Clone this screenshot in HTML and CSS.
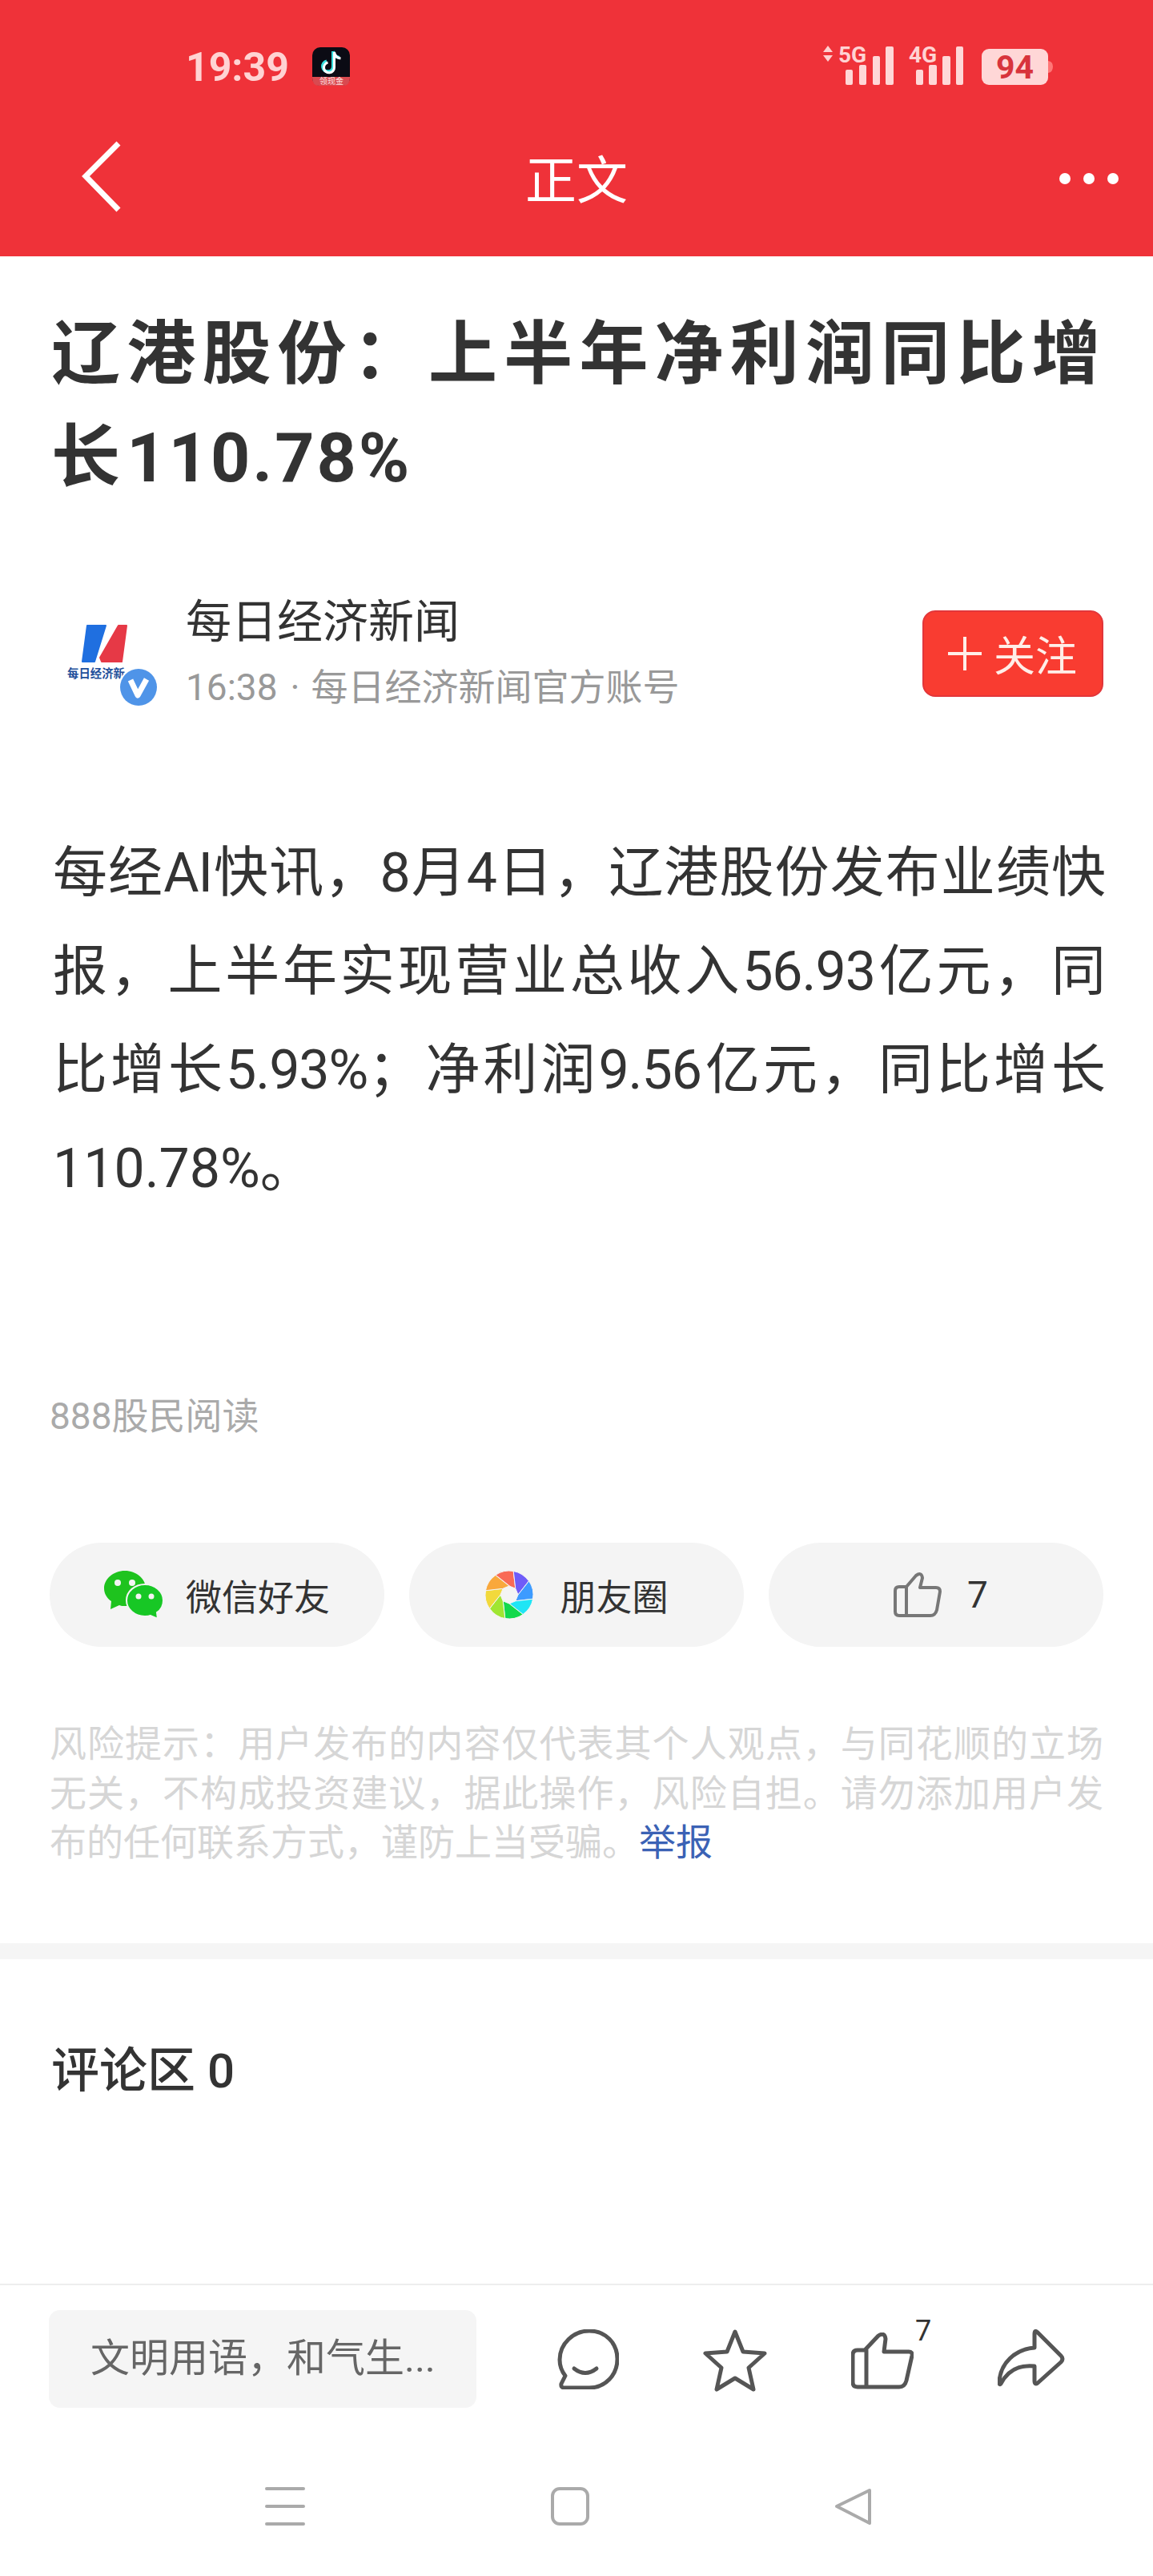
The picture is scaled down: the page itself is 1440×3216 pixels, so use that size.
FILE: index.html
```html
<!DOCTYPE html>
<html lang="zh-CN">
<head>
<meta charset="utf-8">
<title>正文</title>
<link rel="stylesheet" href="styles.css">
</head>
<body>
<div class="page">
  <header class="top">
    <div class="status">
      <span class="time">19:39</span>
      <svg class="tiktok" width="47" height="48" viewBox="0 0 47 48">
        <rect width="47" height="48" rx="10" fill="#0b0b14"/>
        <path d="M0 37 H47 V38 Q47 48 38 48 H9 Q0 48 0 38Z" fill="#d94a50"/>
        <path d="M26 5 V24 A6.5 6.5 0 1 1 18 17.500 M26 5 Q27 12 34 13" fill="none" stroke="#35e0e0" stroke-width="4"/>
        <path d="M27.500 6 V25 A6.500 6.500 0 1 1 19.500 19 M27.500 6 Q28.500 13 35.500 14" fill="none" stroke="#ffffff" stroke-width="3"/>
        <text x="9" y="46" class="tiktok-text">领现金</text>
      </svg>
      <svg class="signal" width="287" height="56" viewBox="0 -6 287 56">
        <path d="M6 0 L12 8 H0Z M6 20 L12 12 H0Z" class="sig-soft"/>
        <text x="19" y="21" class="sig-label">5G</text>
        <rect x="28" y="30" width="9" height="19" rx="2" class="sig-fill"/>
        <rect x="45" y="24" width="9" height="25" rx="2" class="sig-fill"/>
        <rect x="62" y="13" width="9" height="36" rx="2" class="sig-fill"/>
        <rect x="78" y="1" width="10" height="48" rx="2" class="sig-fill"/>
        <text x="107" y="21" class="sig-label">4G</text>
        <rect x="116" y="30" width="9" height="19" rx="2" class="sig-fill"/>
        <rect x="132" y="24" width="10" height="25" rx="2" class="sig-fill"/>
        <rect x="149" y="13" width="10" height="36" rx="2" class="sig-fill"/>
        <rect x="166" y="1" width="9" height="48" rx="2" class="sig-fill"/>
        <rect x="198" y="4" width="83" height="45" rx="9" class="sig-fill"/>
        <path d="M281 19 Q287 20 287 26 Q287 33 281 34Z" class="sig-nub"/>
        <text x="239.500" y="41" class="sig-batt">94</text>
      </svg>
    </div>
    <div class="bar">
      <svg class="back" width="50" height="90" viewBox="0 0 50 90">
        <path d="M46 3 L5 44 L46 86" fill="none" stroke="#fff" stroke-width="7"/>
      </svg>
      <span class="bar-title">正文</span>
      <div class="dots"><i></i><i></i><i></i></div>
    </div>
  </header>

  <main class="content">
    <h1 class="headline">辽港股份：上半年净利润同比增长<span class="latin">110.78%</span></h1>

    <div class="author">
      <div class="avatar">
        <svg width="116" height="104" viewBox="0 0 116 104">
          <polygon points="25,1 48,1 34,46 19,46" fill="#1f6fe0" stroke="#1f6fe0" stroke-width="2" stroke-linejoin="round"/>
          <polygon points="64,1 74,1 68,46 43,46 41,41" fill="#e63946" stroke="#e63946" stroke-width="2" stroke-linejoin="round"/>
          <text x="0" y="66" class="logo-text">每日经济新</text>
          <circle cx="89" cy="78" r="25" fill="#fff"/>
          <circle cx="89" cy="78" r="23" fill="#4f94e8"/>
          <path d="M79 69 L88 88 L99 68" fill="none" stroke="#fff" stroke-width="7" stroke-linejoin="round"/>
        </svg>
      </div>
      <div class="author-info">
        <div class="author-name">每日经济新闻</div>
        <div class="author-sub">16:38<span class="sep">·</span>每日经济新闻官方账号</div>
      </div>
      <button class="follow"><span class="plus"></span>关注</button>
    </div>

    <p class="article">
      <span class="line">每经AI快讯，8月4日，辽港股份发布业绩快</span>
      <span class="line">报，上半年实现营业总收入56.93亿元，同</span>
      <span class="line">比增长5.93%；净利润9.56亿元，同比增长</span>
      <span class="line line-end">110.78%。</span>
    </p>

    <div class="reads">888股民阅读</div>

    <div class="shares">
      <div class="pill">
        <svg class="pill-icon" width="74" height="60" viewBox="0 0 74 60">
          <path d="M26 0 C40 0 52 10 52 22 C52 34 40 44 26 44 C23 44 21 44 19 43 L8 48 L9 38 C3 34 0 28 0 22 C0 10 12 0 26 0Z" fill="#1ec31e"/>
          <path d="M51 17 C64 17 74 26 74 37 C74 43 71 49 66 52 L67 60 L58 56 C56 57 53 57 51 57 C38 57 28 48 28 37 C28 26 38 17 51 17Z" fill="#17c725" stroke="#f4f4f4" stroke-width="2"/>
          <circle cx="17" cy="15" r="4" fill="#f4f4f4"/><circle cx="35" cy="15" r="4" fill="#f4f4f4"/>
          <circle cx="43" cy="32" r="3.500" fill="#f4f4f4"/><circle cx="59" cy="32" r="3.500" fill="#f4f4f4"/>
        </svg>
        <span>微信好友</span>
      </div>
      <div class="pill pill-moments">
        <svg class="pill-icon" width="62" height="62" viewBox="-31 -31 62 62">
          <g stroke="#f4f4f4" stroke-width="1">
            <path d="M0 -11 L-17.200 -24.600 A30 30 0 0 1 5.200 -29.500 L7.800 -7.800Z" fill="#f96a55"/>
            <path d="M0 -11 L-17.200 -24.600 A30 30 0 0 1 5.200 -29.500 L7.800 -7.800Z" fill="#6f5cf8" transform="rotate(45)"/>
            <path d="M0 -11 L-17.200 -24.600 A30 30 0 0 1 5.200 -29.500 L7.800 -7.800Z" fill="#3d9bff" transform="rotate(90)"/>
            <path d="M0 -11 L-17.200 -24.600 A30 30 0 0 1 5.200 -29.500 L7.800 -7.800Z" fill="#1fe5f5" transform="rotate(135)"/>
            <path d="M0 -11 L-17.200 -24.600 A30 30 0 0 1 5.200 -29.500 L7.800 -7.800Z" fill="#12d94c" transform="rotate(180)"/>
            <path d="M0 -11 L-17.200 -24.600 A30 30 0 0 1 5.200 -29.500 L7.800 -7.800Z" fill="#a0e632" transform="rotate(225)"/>
            <path d="M0 -11 L-17.200 -24.600 A30 30 0 0 1 5.200 -29.500 L7.800 -7.800Z" fill="#f2d93c" transform="rotate(270)"/>
            <path d="M0 -11 L-17.200 -24.600 A30 30 0 0 1 5.200 -29.500 L7.800 -7.800Z" fill="#f9a83c" transform="rotate(315)"/>
          </g>
        </svg>
        <span>朋友圈</span>
      </div>
      <div class="pill pill-like">
        <svg class="pill-icon" width="60" height="56" viewBox="0 0 60 56">
          <path d="M16 18 L28 4 Q35 -1 36 7 L33 19 H53 Q58 19 58 24 L54 47 Q52 54 46 54 H7 Q2 54 2 49 V23 Q2 18 7 18 H16 V54" fill="none" stroke="#777" stroke-width="4" stroke-linejoin="round"/>
        </svg>
        <span class="pill-num">7</span>
      </div>
    </div>

    <p class="risk">风险提示：用户发布的内容仅代表其个人观点，与同花顺的立场无关，不构成投资建议，据此操作，风险自担。请勿添加用户发布的任何联系方式，谨防上当受骗。<a class="report">举报</a></p>

    <div class="divider"></div>

    <h2 class="comments">评论区 0</h2>
  </main>

  <footer class="toolbar">
    <div class="input">文明用语，和气生...</div>
    <div class="tools">
      <svg width="78" height="75" viewBox="0 0 78 75">
        <path d="M10 73 L41 73 C61 73 76 57 76 37 C76 17 61 2 41 2 C21 2 4 18 4 38 C4 46 7 53 11 58 Q8 64 6 68 Q5 73 10 73Z" class="tool-line"/>
        <path d="M22 49 Q36 60 50 49" class="tool-line"/>
      </svg>
      <svg width="80" height="78" viewBox="0 0 80 78">
        <path d="M40 3 L50 28 L77 30 L57 48 L63 75 L40 61 L17 75 L23 48 L3 30 L30 28Z" class="tool-line"/>
      </svg>
      <div class="tool-like">
        <svg width="78" height="71" viewBox="0 0 78 71">
          <path d="M17 22 L34 4 Q42 -1 43 8 L41 24 H72 Q77 24 76 29 L69 60 Q67 68 60 68 H8 Q2 68 2 62 V28 Q2 22 8 22 H19 V68" class="tool-line"/>
        </svg>
        <span class="like-count">7</span>
      </div>
      <svg width="84" height="72" viewBox="0 0 84 72">
        <path d="M46 23 V6 Q46 0 50 4 L79 33 Q83 37 79 41 L50 67 Q46 70 46 64 V46 C26 44 12 52 4 68 Q2 70 2 66 C3 42 22 25 46 23Z" class="tool-line"/>
      </svg>
    </div>
  </footer>

  <nav class="sysnav">
    <div class="nav-menu"><i></i><i></i><i></i></div>
    <div class="nav-home"></div>
    <svg width="48" height="47" viewBox="0 0 48 47">
      <path d="M44 3 L3 23 L44 44Z" fill="none" stroke="#aaa" stroke-width="4" stroke-linejoin="round"/>
    </svg>
  </nav>
</div>
</body>
</html>
```

FILE: styles.css
```css
* { box-sizing: border-box; }
html, body { margin: 0; padding: 0; }
body {
  background: #fff;
  font-family: Roboto, "Noto Sans CJK SC", sans-serif;
  color: #333;
}
.page {
  width: 1440px;
  height: 3216px;
  display: flex;
  flex-direction: column;
  overflow: hidden;
}

/* Red header */
.top { height: 320px; background: #ef3239; flex: none; }
.status {
  height: 120px;
  padding: 57px 125px 0 232px;
  display: flex;
  align-items: flex-start;
}
.time {
  font-size: 50px;
  line-height: 50px;
  font-weight: 700;
  color: #ffd3d3;
  width: 158px;
  margin-top: 2px;
}
.tiktok { margin-top: 2px; }
.tiktok-text { font-size: 10px; fill: #ffe0e0; font-family: "Noto Sans CJK SC", sans-serif; }
.signal { margin-left: auto; margin-top: -6px; }
.sig-fill { fill: #ffd7d7; }
.sig-soft { fill: #ffd0d0; }
.sig-nub { fill: #f77; }
.sig-label { font-size: 28px; font-weight: 700; fill: #ffd3d3; font-family: "Liberation Sans Narrow", Roboto, sans-serif; }
.sig-batt { font-size: 41px; font-weight: 700; fill: #d8343c; text-anchor: middle; }
.bar {
  height: 200px;
  padding: 0 43px 0 102px;
  display: flex;
  align-items: center;
  justify-content: space-between;
  position: relative;
}
.back { margin-top: 2px; }
.bar-title {
  font-size: 64px;
  line-height: 64px;
  color: #fff;
  margin-top: 14px;
  position: absolute;
  left: 656px;
}
.dots { display: flex; gap: 16px; margin-top: 6px; }
.dots i { width: 14px; height: 14px; border-radius: 50%; background: #fff; display: block; }

/* Article */
.content { flex: 1; min-height: 0; }
.headline {
  margin: 58px 50px 0 64px;
  font-size: 86px;
  line-height: 129px;
  font-weight: 700;
  letter-spacing: 8.200px;
  color: #333;
}
.latin { letter-spacing: 3px; }
.author {
  margin: 113px 62px 0 84px;
  height: 137px;
  display: flex;
  align-items: center;
}
.avatar { width: 148px; height: 137px; padding-top: 31px; flex: none; }
.avatar svg { display: block; }
.logo-text { font-size: 14.400px; font-weight: 700; fill: #1f4f9a; font-family: "Noto Sans CJK SC", serif; }
.author-info { flex: 1; }
.author-name { font-size: 57px; line-height: 60px; color: #333; }
.author-sub { font-size: 46px; line-height: 60px; color: #999; margin-top: 21px; }
.sep { margin: 0 14px 0 16px; }
.follow {
  width: 226px;
  height: 108px;
  margin-top: -4px;
  background: #f93c31;
  border: 2px solid #e2363a;
  border-radius: 16px;
  color: #ffeee8;
  font: 52px/1 "Noto Sans CJK SC", sans-serif;
  display: flex;
  align-items: center;
  padding: 0 0 0 30px;
}
.plus {
  width: 42px;
  height: 42px;
  margin-right: 15px;
  background:
    linear-gradient(#ffeee8, #ffeee8) center / 100% 4px no-repeat,
    linear-gradient(#ffeee8, #ffeee8) center / 4px 100% no-repeat;
}
.article {
  margin: 143px 60px 0 66px;
  font-size: 68px;
  line-height: 123px;
  letter-spacing: -1px;
  color: #333;
}
.line { display: block; text-align: justify; text-align-last: justify; }
.line-end { text-align-last: left; letter-spacing: 0; }
.reads { margin: 217px 62px 0; font-size: 46px; line-height: 60px; color: #aaa; }
.shares {
  margin: 128px 62px 0;
  display: grid;
  grid-template-columns: repeat(3, 1fr);
  gap: 31px;
}
.pill {
  height: 130px;
  border-radius: 65px;
  background: #f4f4f4;
  display: flex;
  align-items: center;
  justify-content: center;
  gap: 28px;
  font-size: 45px;
  color: #333;
}
.pill-moments { gap: 32px; }
.pill-like { padding-left: 12px; }
.pill-num { font-size: 46px; margin-left: 4px; }
.risk {
  margin: 91px 62px 0;
  font-size: 46px;
  line-height: 61.500px;
  text-align: justify;
  color: #d6d6d6;
}
.report { color: #3b62b5; }
.divider { height: 20px; margin-top: 94px; background: #f5f5f5; }
.comments {
  margin: 100px 0 0 64px;
  font-size: 60px;
  line-height: 80px;
  font-weight: 500;
  color: #333;
}

/* Bottom */
.toolbar {
  flex: none;
  height: 203px;
  border-top: 2px solid #eee;
  padding: 31px 0 0 61px;
  display: flex;
  align-items: flex-start;
}
.input {
  width: 534px;
  height: 122px;
  border-radius: 14px;
  background: #f5f5f5;
  padding-left: 52px;
  font-size: 49px;
  line-height: 122px;
  color: #666;
}
.tools {
  margin-left: 100px;
  display: flex;
  align-items: flex-start;
  gap: 105px;
  padding-top: 24px;
}
.tool-line { fill: none; stroke: #555; stroke-width: 5; stroke-linejoin: round; stroke-linecap: round; }
.tool-like { position: relative; width: 78px; height: 71px; margin-top: 4px; }
.like-count {
  position: absolute;
  left: 80px;
  top: -20px;
  font-size: 36px;
  line-height: 36px;
  color: #333;
}
.sysnav {
  flex: none;
  height: 162px;
  padding: 0 350px 12px 331px;
  display: flex;
  align-items: center;
  justify-content: space-between;
}
.nav-menu { width: 50px; display: flex; flex-direction: column; gap: 18px; }
.nav-menu i { height: 4px; background: #aaa; border-radius: 2px; display: block; }
.nav-home { width: 48px; height: 48px; border: 4px solid #aaa; border-radius: 11px; }
```
